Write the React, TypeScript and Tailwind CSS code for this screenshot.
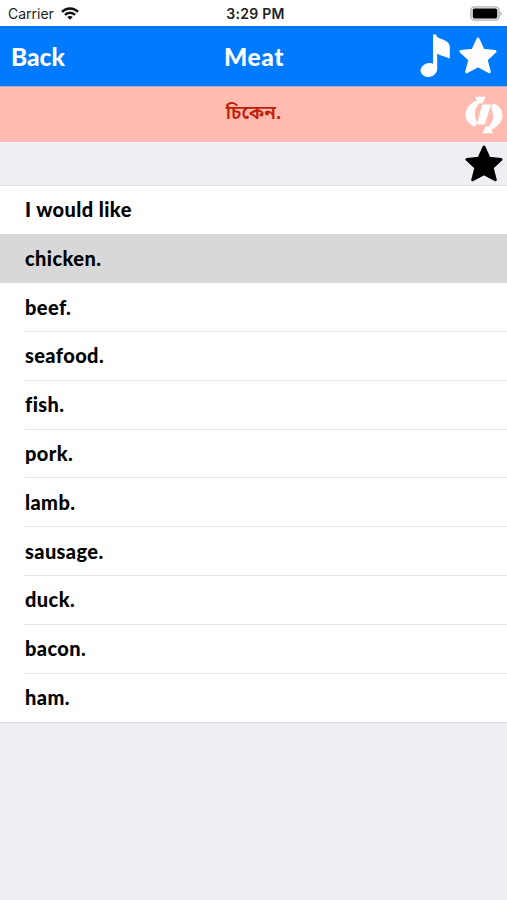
import React from 'react';

interface Phrase {
    id: number;
    text: string;
}

const PHRASES: Phrase[] = [
    { id: 0, text: 'I would like' },
    { id: 1, text: 'chicken.' },
    { id: 2, text: 'beef.' },
    { id: 3, text: 'seafood.' },
    { id: 4, text: 'fish.' },
    { id: 5, text: 'pork.' },
    { id: 6, text: 'lamb.' },
    { id: 7, text: 'sausage.' },
    { id: 8, text: 'duck.' },
    { id: 9, text: 'bacon.' },
    { id: 10, text: 'ham.' },
];

const SELECTED_ID = 1;

function WifiIcon() {
    return (
        <svg className="w-[18px] h-[13px]" viewBox="0 0 17 12" fill="none" stroke="#111" strokeWidth="2.3">
            <path d="M0.9 4.5C5.1 0.2 11.9 0.2 16.1 4.5" />
            <path d="M3.7 7.3C6.4 4.6 10.6 4.6 13.3 7.3" />
            <path d="M8.5 12L5.9 9.3C7.4 8 9.6 8 11.1 9.3Z" fill="#111" stroke="none" />
        </svg>
    );
}

function BatteryIcon() {
    return (
        <svg className="w-[33px] h-[15px]" viewBox="0 0 33 15">
            <rect x="0.9" y="0.9" width="28.2" height="13.2" rx="3.6" fill="#eee" stroke="#b4b4b4" strokeWidth="1.4" />
            <rect x="2.8" y="2.6" width="24.4" height="9.8" rx="1.6" fill="#000" />
            <path d="M30.5 5.3C32.1 6 32.1 9 30.5 9.7Z" fill="#999" />
        </svg>
    );
}

function NoteIcon() {
    return (
        <svg className="w-[31px] h-[44px]" viewBox="0 0 31 44" fill="#fff">
            <ellipse cx="8.8" cy="36" rx="8.3" ry="6.9" transform="rotate(-12 8.8 36)" />
            <path d="M13 1.6Q13 0.2 14.8 0.2Q16.3 0.2 16.8 2.2C17.6 5.3 28 4.5 29.8 11.7V23.3Q29.8 24.8 28.4 24.3C26.6 22.5 21 22.2 17.2 19.5V36H13Z" />
        </svg>
    );
}

function StarIcon({ className }: { className: string }) {
    return (
        <svg className={className} viewBox="0 0 38 37" fill="currentColor" stroke="currentColor" strokeWidth="3" strokeLinejoin="round">
            <path d="M19 2L24 13.2L36 14.5L27.1 22.7L30.3 34.8L19 28.6L7.7 34.8L10.9 22.7L2 14.5L14 13.2Z" />
        </svg>
    );
}

function FlipIcon() {
    return (
        <svg className="w-[38px] h-[38px]" viewBox="0 0 38 38" fill="#fff">
            <path d="M10.2 0.8H20.8L16.8 8.4L15.2 6.8C9.6 11.5 8.3 17.8 12.2 26.8L9.8 30.7C-2.7 26.3-2.8 10.8 11.5 4.6Z" />
            <path d="M27.8 37.2H17.2L21.2 29.6L22.8 31.2C28.4 26.5 29.7 20.2 25.8 11.2L28.2 7.3C40.7 11.7 40.8 27.2 26.5 33.4Z" />
            <path d="M17.2 8.5H26.2L24.2 14.5L19.6 28.5H11.8Z" />
        </svg>
    );
}

function PhraseRow({ phrase, selected, last }: { phrase: Phrase; selected: boolean; last: boolean }) {
    return (
        <li className={`h-[48.82px] pl-[25px] ${selected ? 'bg-[#d8d8d8]' : 'bg-white'}`}>
            <div className={`h-full flex items-center pb-[1px] border-b ${last || selected || phrase.id === 0 ? 'border-transparent' : 'border-[#e5e5e7]'}`}>
                <span className="text-[20px] leading-6 font-black tracking-[0.4px] text-black">{phrase.text}</span>
            </div>
        </li>
    );
}

export default function App() {
    return (
        <div className="w-full h-[900px] overflow-hidden bg-[#eeeef3] font-['Lato',sans-serif]">
            {/* Status bar */}
            <div className="h-[25.5px] grid grid-cols-3 items-center bg-white pl-2 pr-1 pt-[1px] font-['Inter',sans-serif] text-[#222]">
                <div className="flex items-center gap-[7px]">
                    <span className="text-[14px]">Carrier</span>
                    <WifiIcon />
                </div>
                <span className="text-[14px] font-semibold text-center tracking-[0.3px]">3:29 PM</span>
                <div className="flex justify-end">
                    <BatteryIcon />
                </div>
            </div>

            {/* Navigation bar */}
            <header className="h-[61px] grid grid-cols-3 items-center bg-[#007aff] pl-[11px] pr-[10px] border-b border-[#b3a9c5] text-white text-[24.5px] font-black">
                <button className="text-left pt-[3px]">Back</button>
                <h1 className="text-center pt-[3px] tracking-[0.6px]">Meat</h1>
                <div className="flex items-center justify-end gap-2">
                    <NoteIcon />
                    <StarIcon className="w-[38px] h-[37px]" />
                </div>
            </header>

            {/* Translation */}
            <div className="relative h-[55.5px] flex items-center justify-center bg-[#ffbbb0]">
                <span className="pt-[2px] text-[19px] font-semibold text-[#bd2107] font-['Noto_Sans_Bengali','Noto_Sans',sans-serif]">চিকেন.</span>
                <button className="absolute right-[4px] top-[9px]">
                    <FlipIcon />
                </button>
            </div>

            <div className="h-[43.5px] flex items-center justify-end pr-[4px] border-b border-[#e0e0e3]">
                <StarIcon className="w-[38px] h-[37px] text-black" />
            </div>

            <ul className="border-b border-[#d9d9dc]">
                {PHRASES.map((phrase, index) => (
                    <PhraseRow
                        key={phrase.id}
                        phrase={phrase}
                        selected={phrase.id === SELECTED_ID}
                        last={index === PHRASES.length - 1}
                    />
                ))}
            </ul>
        </div>
    );
}
